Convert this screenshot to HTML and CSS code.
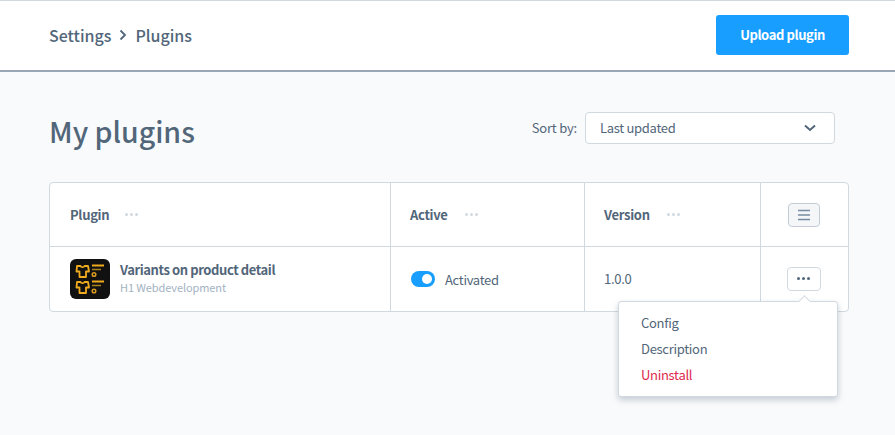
FILE: index.html
```html
<!DOCTYPE html>
<html lang="en">
<head>
<meta charset="utf-8">
<title>My plugins</title>
<link rel="stylesheet" href="styles.css">
</head>
<body>
<header class="topbar">
  <nav class="crumbs">
    <span>Settings</span>
    <svg class="crumb-sep" width="8" height="12" viewBox="0 0 8 12"><path d="M1.500 1.500 6 6l-4.500 4.500" fill="none" stroke="#52667a" stroke-width="1.800"/></svg>
    <span>Plugins</span>
  </nav>
  <button class="upload">Upload plugin</button>
</header>
<main class="content">
  <div class="title-row">
    <h1>My plugins</h1>
    <div class="sort">
      <label>Sort by:</label>
      <div class="select">
        <span class="select-value">Last updated</span>
        <svg width="12" height="8" viewBox="0 0 12 8"><path d="M1 1.500 6 6l5-4.500" fill="none" stroke="#52667a" stroke-width="2"/></svg>
      </div>
    </div>
  </div>
  <div class="table-wrap">
    <div class="grid">
      <div class="cell head first"><b>Plugin</b><i class="dots"><s></s><s></s><s></s></i></div>
      <div class="cell head"><b>Active</b><i class="dots"><s></s><s></s><s></s></i></div>
      <div class="cell head"><b>Version</b><i class="dots"><s></s><s></s><s></s></i></div>
      <div class="cell head center">
        <span class="menu-btn">
          <svg width="16" height="12" viewBox="0 0 16 12"><path d="M2 1.500h12M2 6h12M2 10.500h12" stroke="#758ca3" stroke-width="1.600"/></svg>
        </span>
      </div>
      <div class="cell row first">
        <svg class="logo" width="40" height="40" viewBox="0 0 40 40">
          <rect width="40" height="40" rx="6" fill="#111"/>
          <g fill="none" stroke="#f0aa1e" stroke-width="1.800" stroke-linejoin="round">
            <path d="M7 7h3.500c.5 1.500 3.500 1.500 4 0H18l1 5.500-3-.2V18H9.500v-5.700l-3 .2Z"/>
            <path d="M7 23h3.500c.5 1.500 3.500 1.500 4 0H18l1 5.500-3-.2V34H9.500v-5.700l-3 .2Z"/>
          </g>
          <g fill="none" stroke="#d99a20" stroke-width="1.500">
            <circle cx="24" cy="15.500" r="1.800"/>
            <circle cx="24" cy="32" r="1.800"/>
          </g>
          <path d="M22 6.500h12M22 22.500h12" stroke="#f0aa1e" stroke-width="2"/>
          <path d="M22 10.500h9M22 26.500h9" stroke="#a8821f" stroke-width="1.500"/>
        </svg>
        <div class="plugin-text">
          <div class="plugin-name">Variants on product detail</div>
          <div class="plugin-vendor">H1 Webdevelopment</div>
        </div>
      </div>
      <div class="cell row">
        <span class="toggle"></span>
        <span class="toggle-label">Activated</span>
      </div>
      <div class="cell row version"><span>1.0.0</span></div>
      <div class="cell row center">
        <span class="ctx-btn"><s></s><s></s><s></s></span>
      </div>
    </div>
    <div class="popover">
      <span class="arrow"></span>
      <a>Config</a>
      <a>Description</a>
      <a class="danger">Uninstall</a>
    </div>
  </div>
</main>
</body>
</html>
```

FILE: styles.css
```css
* { box-sizing: border-box; }
html, body { margin: 0; height: 100%; }
body {
  background: #f9fafb;
  color: #52667a;
  font-family: "Noto Sans CJK SC", "Noto Sans", sans-serif;
  font-size: 13px;
  letter-spacing: -0.3px;
  overflow: hidden;
}
.topbar {
  height: 72px;
  background: #fff;
  border-top: 1px solid #d1d9e0;
  border-bottom: 2px solid #9aa8b5;
  display: flex;
  align-items: center;
  justify-content: space-between;
  padding: 0 46px 1px 49px;
}
.crumbs {
  display: flex;
  align-items: center;
  gap: 8px;
  font-size: 16px;
  font-weight: 500;
  line-height: 24px;
  letter-spacing: 0;
}
.upload {
  width: 133px;
  height: 40px;
  border: 0;
  border-radius: 3px;
  background: #189eff;
  color: #fff;
  font: 700 13px/40px "Noto Sans CJK SC", sans-serif;
  letter-spacing: -0.4px;
  padding: 0;
}
.content { padding: 40px 46px 0 49px; }
.title-row {
  height: 32px;
  display: flex;
  align-items: center;
  justify-content: space-between;
  padding-right: 14px;
}
h1 {
  margin: 6px 0 0;
  font-size: 28.5px;
  font-weight: 500;
  line-height: 40px;
  letter-spacing: 0;
}
.sort { display: flex; align-items: center; gap: 8px; }
.sort label { line-height: 20px; letter-spacing: -0.2px; }
.select {
  width: 250px;
  height: 32px;
  background: #fff;
  border: 1px solid #d1d9e0;
  border-radius: 4px;
  display: flex;
  align-items: center;
  justify-content: space-between;
  padding: 0 18px 0 14px;
}
.select-value { margin-top: -2px; }
.table-wrap { position: relative; margin-top: 38px; }
.grid {
  display: grid;
  grid-template-columns: 340px 194px 176px 88px;
  grid-template-rows: 64px 64px;
  height: 130px;
  background: #fff;
  border: 1px solid #d1d9e0;
  border-radius: 4px;
}
.cell {
  display: flex;
  align-items: center;
  padding-left: 19px;
  border-left: 1px solid #d1d9e0;
}
.cell.first { border-left: 0; padding-left: 20px; }
.cell.head { border-bottom: 1px solid #d1d9e0; }
.cell.head b { font-weight: 700; font-size: 13px; line-height: 20px; }
.cell.center { justify-content: center; padding: 0 2px 0 0; }
.dots { display: inline-flex; gap: 2px; margin-left: 17px; }
.first .dots { margin-left: 16px; }
.dots s { width: 3px; height: 3px; border-radius: 50%; background: #d1d9e0; }
.menu-btn {
  width: 32px;
  height: 24px;
  background: #f4f6f8;
  border: 1px solid #c3ccd6;
  border-radius: 4px;
  display: flex;
  align-items: center;
  justify-content: center;
}
.logo { flex: none; }
.plugin-text { margin-left: 10px; margin-top: -4px; }
.plugin-name { font-weight: 700; font-size: 13px; line-height: 19px; letter-spacing: -0.4px; }
.plugin-vendor { font-size: 11px; line-height: 16px; color: #a3b2c2; letter-spacing: -0.1px; }
.toggle {
  position: relative;
  width: 24px;
  height: 16px;
  margin-left: 1px;
  border-radius: 8px;
  background: #189eff;
}
.toggle::after {
  content: "";
  position: absolute;
  right: 3px;
  top: 3px;
  width: 10px;
  height: 10px;
  border-radius: 50%;
  background: #fff;
}
.toggle-label { margin-left: 10px; line-height: 20px; margin-top: 2px; }
.version span { line-height: 20px; }
.ctx-btn {
  width: 34px;
  height: 24px;
  background: #fff;
  border: 1px solid #d1d9e0;
  border-radius: 4px;
  display: flex;
  align-items: center;
  justify-content: center;
  gap: 2px;
  margin-top: -1px;
}
.ctx-btn s { width: 3px; height: 3px; border-radius: 50%; background: #52667a; }
.popover {
  position: absolute;
  left: 569px;
  top: 119px;
  width: 220px;
  height: 96px;
  padding: 8px 22px 0;
  background: #fff;
  border: 1px solid #d1d9e0;
  border-radius: 3px;
  box-shadow: 0 3px 6px rgba(120, 138, 155, 0.4);
}
.popover a { display: block; height: 26px; line-height: 26px; }
.popover .danger { color: #de294c; }
.arrow {
  position: absolute;
  right: 28px;
  top: -5px;
  width: 9px;
  height: 9px;
  background: #fff;
  border-left: 1px solid #d1d9e0;
  border-top: 1px solid #d1d9e0;
  transform: rotate(45deg);
}
```
